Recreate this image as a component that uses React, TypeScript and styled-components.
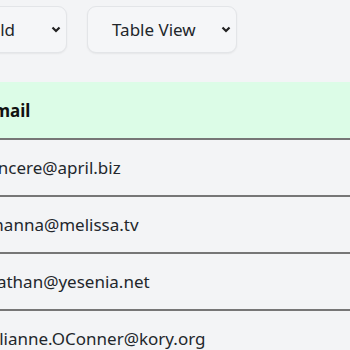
import React from "react";
import styled, { createGlobalStyle } from "styled-components";

const GlobalStyle = createGlobalStyle`
  html, body {
    margin: 0;
    padding: 0;
    background: #f3f4f6;
    font-family: "Noto Sans", "Open Sans", sans-serif;
    color: #1f2328;
  }
`;

//frame
const Viewport = styled.div`
  width: 350px;
  height: 350px;
  overflow: hidden;
  background: #f3f4f6;
`;
const Track = styled.div`
  margin-left: -132px;
  padding: 6px 0 0 24px;
  width: 700px;
`;

//toolbar
const Toolbar = styled.div`
  display: flex;
  gap: 20px;
`;
const SelectBox = styled.div<{ $width: number }>`
  width: ${(p) => p.$width}px;
  height: 47px;
  box-sizing: border-box;
  display: flex;
  align-items: center;
  justify-content: space-between;
  padding: 0 5px 0 24px;
  border: 1px solid #e3e5e8;
  border-radius: 9px;
  background: #f5f6f8;
  box-shadow: 0 1px 2px rgba(0, 0, 0, 0.06);
  font-size: 17px;
  color: #22262b;
`;
const Chevron = () => (
  <svg width="10" height="7" viewBox="0 0 10 7">
    <path d="M1.5 1.5 L5 5 L8.5 1.5" fill="none" stroke="#222" strokeWidth="2.2" />
  </svg>
);

//table
const Table = styled.table`
  margin-top: 29px;
  width: 640px;
  border-collapse: collapse;
  table-layout: fixed;
  font-size: 17px;
`;
const HeadCell = styled.th`
  text-align: left;
  font-weight: 700;
  background: #dcfce7;
  height: 56px;
  padding: 0 16px;
  border-bottom: 2px solid #767676;
  color: #111;
`;
const Cell = styled.td`
  height: 55px;
  padding: 0 16px;
  border-bottom: 2px solid #767676;
  color: #23272c;
  white-space: nowrap;
`;

const users = [
  { id: 1, email: "Sincere@april.biz" },
  { id: 2, email: "Shanna@melissa.tv" },
  { id: 3, email: "Nathan@yesenia.net" },
  { id: 4, email: "Julianne.OConner@kory.org" },
];

export default () => {
  return (
    <Viewport>
      <GlobalStyle />
      <Track>
        <Toolbar>
          <SelectBox $width={175}>
            <span>Sort by Field</span>
            <Chevron />
          </SelectBox>
          <SelectBox $width={150}>
            <span>Table View</span>
            <Chevron />
          </SelectBox>
        </Toolbar>
        <Table>
          <colgroup>
            <col style={{ width: 76 }} />
            <col />
          </colgroup>
          <thead>
            <tr>
              <HeadCell>ID</HeadCell>
              <HeadCell>Email</HeadCell>
            </tr>
          </thead>
          <tbody>
            {users.map((u) => (
              <tr key={u.id}>
                <Cell>{u.id}</Cell>
                <Cell>{u.email}</Cell>
              </tr>
            ))}
          </tbody>
        </Table>
      </Track>
    </Viewport>
  );
};
